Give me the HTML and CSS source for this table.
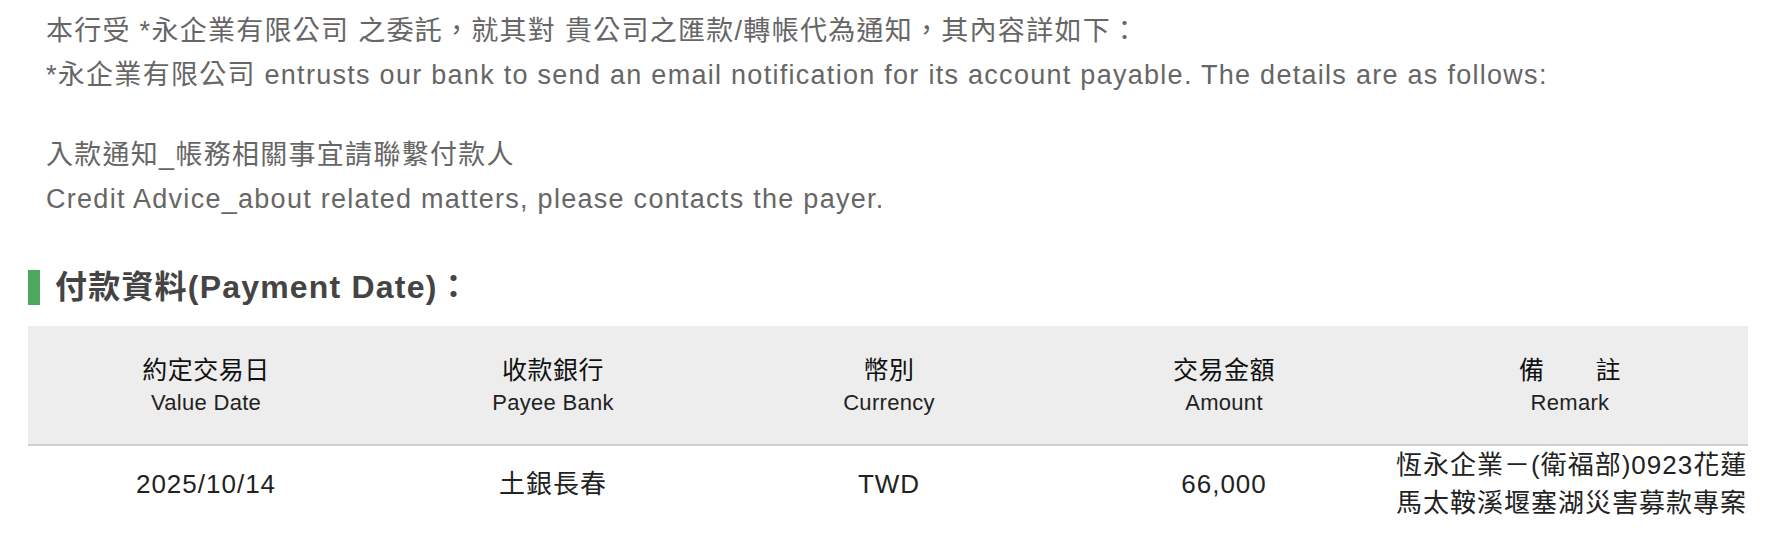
FILE: index.html
```html
<!DOCTYPE html>
<html lang="zh-Hant">
<head>
<meta charset="utf-8">
<title>入款通知</title>
<link rel="stylesheet" href="styles.css">
</head>
<body>
<div class="page">
  <p class="intro">本行受 *永企業有限公司 之委託，就其對 貴公司之匯款/轉帳代為通知，其內容詳如下：<br>*永企業有限公司 entrusts our bank to send an email notification for its account payable. The details are as follows:</p>
  <p class="intro">入款通知_帳務相關事宜請聯繫付款人<br>Credit Advice_about related matters, please contacts the payer.</p>

  <h2 class="section-title"><span class="bar"></span><span>付款資料(Payment Date)：</span></h2>

  <table class="pay-table">
    <colgroup>
      <col class="c1"><col class="c2"><col class="c3"><col class="c4"><col class="c5">
    </colgroup>
    <thead>
      <tr>
        <th><span class="th-zh">約定交易日</span><span class="th-en">Value Date</span></th>
        <th><span class="th-zh">收款銀行</span><span class="th-en">Payee Bank</span></th>
        <th><span class="th-zh">幣別</span><span class="th-en">Currency</span></th>
        <th><span class="th-zh">交易金額</span><span class="th-en">Amount</span></th>
        <th><span class="th-zh">備　　註</span><span class="th-en">Remark</span></th>
      </tr>
    </thead>
    <tbody>
      <tr>
        <td>2025/10/14</td>
        <td>土銀長春</td>
        <td>TWD</td>
        <td>66,000</td>
        <td>恆永企業－(衛福部)0923花蓮<br>馬太鞍溪堰塞湖災害募款專案</td>
      </tr>
    </tbody>
  </table>
</div>
</body>
</html>
```
FILE: styles.css
```css
html, body {
  margin: 0;
  background: #ffffff;
}

body {
  font-family: "Liberation Sans", "Noto Sans CJK TC", sans-serif;
}

.page {
  padding: 9px 18px 0 28px;
}

.intro {
  margin: 0;
  padding-left: 18px;
  font-size: 27px;
  line-height: 44px;
  letter-spacing: 1.28px;
  color: #666666;
  white-space: nowrap;
}

.intro + .intro {
  margin-top: 36px;
}

.section-title {
  display: flex;
  align-items: center;
  gap: 15px;
  margin: 49px 0 21px;
  font-size: 32px;
  line-height: 35px;
  font-weight: bold;
  letter-spacing: 1.2px;
  color: #444444;
}

.bar {
  width: 12px;
  height: 35px;
  background: #4ca85d;
  flex: none;
}

.pay-table {
  width: 1720px;
  border-collapse: collapse;
  table-layout: fixed;
}

.c1 { width: 356px; }
.c2 { width: 338px; }
.c3 { width: 334px; }
.c4 { width: 336px; }
.c5 { width: 356px; }

.pay-table th {
  background: #ededed;
  padding: 26px 4px;
  border-bottom: 2px solid #cfcfcf;
  font-weight: normal;
  text-align: center;
}

.th-zh {
  display: block;
  font-size: 25px;
  line-height: 36px;
  letter-spacing: 0.5px;
  color: #111111;
}

.th-en {
  display: block;
  font-size: 22px;
  line-height: 30px;
  letter-spacing: 0.3px;
  color: #222222;
}

.pay-table td {
  height: 74px;
  padding: 0 4px;
  font-size: 26px;
  line-height: 38px;
  letter-spacing: 1px;
  color: #222222;
  text-align: center;
  vertical-align: middle;
  white-space: nowrap;
}
```
